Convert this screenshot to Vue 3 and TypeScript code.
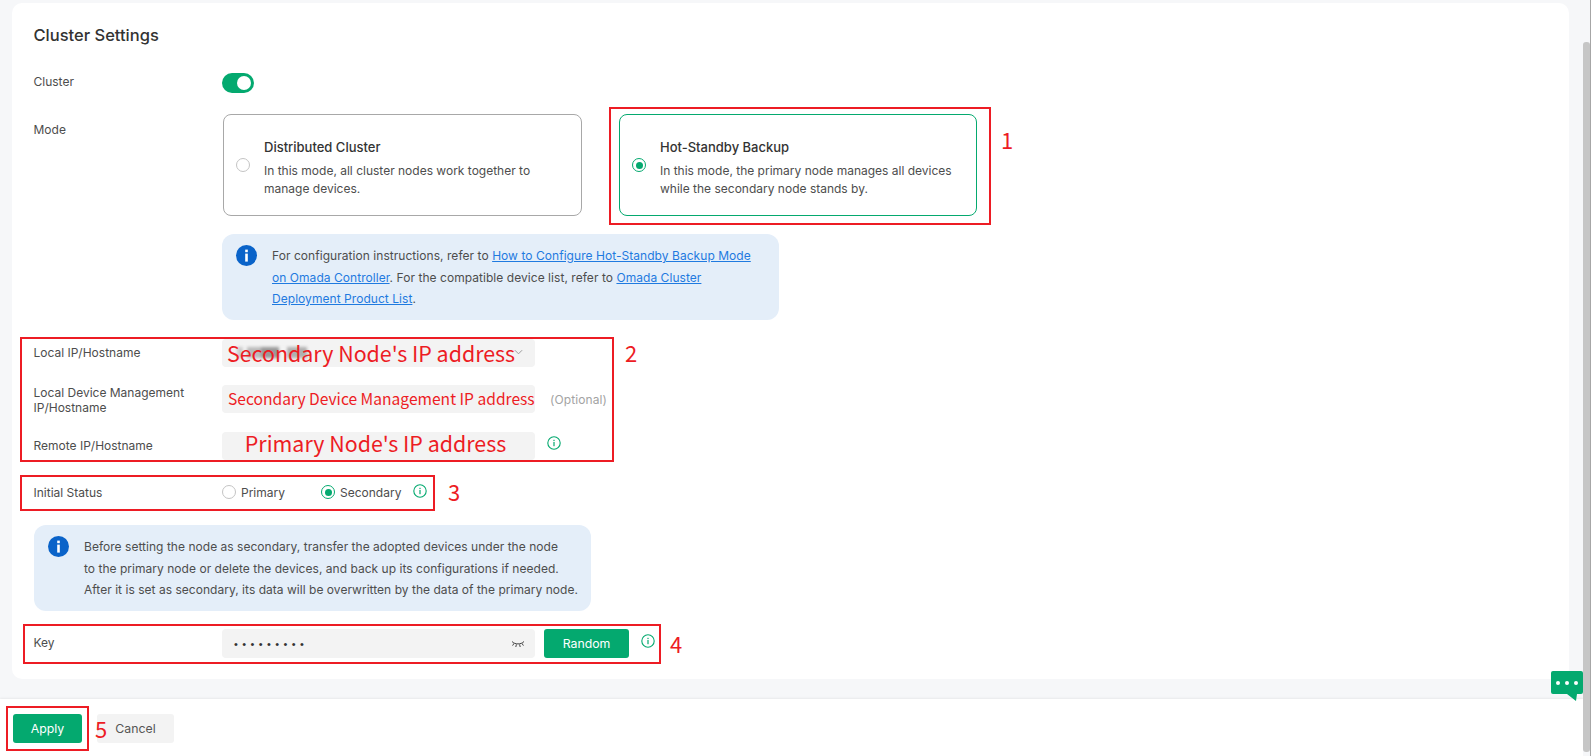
<script setup lang="ts">
const modes = [
  { title: 'Distributed Cluster', desc: 'In this mode, all cluster nodes work together to manage devices.', on: false },
  { title: 'Hot-Standby Backup', desc: 'In this mode, the primary node manages all devices while the secondary node stands by.', on: true },
]
</script>

<template>
  <div class="page">
    <div class="main">
      <div class="content">
        <section class="card">
          <h1 class="title">Cluster Settings</h1>

          <div class="row row-cluster">
            <div class="label label-short">Cluster</div>
            <div class="toggle"><span class="knob"></span></div>
          </div>

          <div class="row row-mode">
            <div class="label label-mode">Mode</div>
            <div class="modes">
              <div v-for="m in modes" :key="m.title" class="mode" :class="{ active: m.on }">
                <span class="radio" :class="{ checked: m.on }"></span>
                <div class="mode-text">
                  <div class="mode-title">{{ m.title }}</div>
                  <div class="mode-desc">{{ m.desc }}</div>
                </div>
              </div>
            </div>
          </div>

          <div class="notice notice-a">
            <svg class="notice-icon" viewBox="0 0 21 21"><circle cx="10.5" cy="10.5" r="10.5" fill="#0a63c9"/><rect x="9.2" y="8.6" width="2.6" height="8" fill="#fff"/><rect x="9.2" y="4.6" width="2.6" height="2.6" fill="#fff"/></svg>
            <p>For configuration instructions, refer to <a>How to Configure Hot-Standby Backup Mode on Omada Controller</a>. For the compatible device list, refer to <a>Omada Cluster Deployment Product List</a>.</p>
          </div>

          <div class="row row-ip row-first">
            <div class="label label-up">Local IP/Hostname</div>
            <div class="field field-select">
              <span class="blur"></span>
              <span class="note note-a">Secondary Node's IP address</span>
              <svg class="chevron" viewBox="0 0 10 6"><path d="M1 1l4 4 4-4" fill="none" stroke="#9a9a9a" stroke-width="1.1"/></svg>
            </div>
          </div>
          <div class="row row-ip row-second">
            <div class="label label-two">Local Device Management IP/Hostname</div>
            <div class="field"><span class="note note-b">Secondary Device Management IP address</span></div>
            <span class="optional">(Optional)</span>
          </div>
          <div class="row row-ip row-third">
            <div class="label label-up">Remote IP/Hostname</div>
            <div class="field field-center"><span class="note note-c">Primary Node's IP address</span></div>
            <svg class="hint hint-remote" viewBox="0 0 14 14"><circle cx="7" cy="7" r="6.2" fill="none" stroke="#04a96f" stroke-width="1.1"/><rect x="6.4" y="6" width="1.2" height="4.2" fill="#04a96f"/><rect x="6.4" y="3.8" width="1.2" height="1.3" fill="#04a96f"/></svg>
          </div>

          <div class="row row-status">
            <div class="label">Initial Status</div>
            <label class="choice choice-primary"><span class="radio"></span>Primary</label>
            <label class="choice choice-secondary"><span class="radio checked"></span>Secondary</label>
            <svg class="hint hint-status" viewBox="0 0 14 14"><circle cx="7" cy="7" r="6.2" fill="none" stroke="#04a96f" stroke-width="1.1"/><rect x="6.4" y="6" width="1.2" height="4.2" fill="#04a96f"/><rect x="6.4" y="3.8" width="1.2" height="1.3" fill="#04a96f"/></svg>
          </div>

          <div class="notice notice-b">
            <svg class="notice-icon" viewBox="0 0 21 21"><circle cx="10.5" cy="10.5" r="10.5" fill="#0a63c9"/><rect x="9.2" y="8.6" width="2.6" height="8" fill="#fff"/><rect x="9.2" y="4.6" width="2.6" height="2.6" fill="#fff"/></svg>
            <p>Before setting the node as secondary, transfer the adopted devices under the node<br>to the primary node or delete the devices, and back up its configurations if needed.<br>After it is set as secondary, its data will be overwritten by the data of the primary node.</p>
          </div>

          <div class="row row-key">
            <div class="label label-up">Key</div>
            <div class="field field-key">
              <span class="dots">•••••••••</span>
              <svg class="eye" viewBox="0 0 14 9"><path d="M1 1.5c2.8 3.2 9.2 3.2 12 0M3 3.4L1.6 5.6M5.4 4.4L4.8 7M8.6 4.4L9.2 7M11 3.4l1.4 2.2" fill="none" stroke="#444" stroke-width="1"/></svg>
            </div>
            <button class="btn btn-primary btn-random">Random</button>
            <svg class="hint hint-key" viewBox="0 0 14 14"><circle cx="7" cy="7" r="6.2" fill="none" stroke="#04a96f" stroke-width="1.1"/><rect x="6.4" y="6" width="1.2" height="4.2" fill="#04a96f"/><rect x="6.4" y="3.8" width="1.2" height="1.3" fill="#04a96f"/></svg>
          </div>
        </section>
      </div>
      <footer class="footer">
        <button class="btn btn-primary btn-apply">Apply</button>
        <button class="btn btn-cancel">Cancel</button>
      </footer>
    </div>
    <div class="scrolltrack"><div class="thumb"></div></div>

    <div class="chat">
      <svg viewBox="0 0 32 30"><path d="M2 0h28a2 2 0 0 1 2 2v19a2 2 0 0 1-2 2h-4l-1 7-9-7H2a2 2 0 0 1-2-2V2a2 2 0 0 1 2-2z" fill="#04a96f"/><circle cx="7" cy="12" r="2" fill="#fff"/><circle cx="16" cy="12" r="2" fill="#fff"/><circle cx="25" cy="12" r="2" fill="#fff"/></svg>
    </div>

    <div class="mark mark-1"></div><span class="num num-1">1</span>
    <div class="mark mark-2"></div><span class="num num-2">2</span>
    <div class="mark mark-3"></div><span class="num num-3">3</span>
    <div class="mark mark-4"></div><span class="num num-4">4</span>
    <div class="mark mark-5"></div><span class="num num-5">5</span>
  </div>
</template>

<style>
html, body { margin: 0; padding: 0; background: #fff; overflow: hidden; }
</style>

<style scoped>
.page {
  position: relative;
  display: flex;
  width: 1591px;
  height: 756px;
  overflow: hidden;
  font-family: Inter, "Open Sans", sans-serif;
  font-size: 12px;
  color: #4d4d4d;
  background: #fff;
}
.main { flex: 1; display: flex; flex-direction: column; min-width: 0; }
.content { height: 699px; box-sizing: border-box; background: #f6f7f9; padding: 3px 14px 0 12px; }
.card {
  height: 676px;
  box-sizing: border-box;
  background: #fff;
  border-radius: 10px;
  padding: 21px 22px 0 21.5px;
}
.title { margin: 0; font-size: 16.5px; line-height: 22px; font-weight: 500; color: #333; }
.row { display: flex; align-items: center; }
.label { width: 188.5px; flex: none; line-height: 15px; padding-right: 8px; box-sizing: border-box; }
.label-up { margin-bottom: 2px; }
.label-two { margin-top: 2px; }

.row-cluster { align-items: flex-start; margin-top: 27px; height: 20px; }
.label-short { line-height: 18px; }
.toggle { width: 32px; height: 20px; border-radius: 10px; background: #04a96f; position: relative; }
.knob { position: absolute; right: 3px; top: 3px; width: 14px; height: 14px; border-radius: 50%; background: #fff; }

.row-mode { align-items: flex-start; margin-top: 21px; }
.label-mode { padding-top: 8px; }
.modes { display: flex; gap: 37px; margin-left: 1px; }
.mode {
  width: 359px;
  height: 102px;
  box-sizing: border-box;
  border: 1px solid #a8a8a8;
  border-radius: 8px;
  display: flex;
  align-items: center;
  padding-left: 12px;
}
.mode.active { border-color: #04a96f; width: 358px; }
.radio {
  display: inline-block;
  flex: none;
  width: 14px;
  height: 14px;
  box-sizing: border-box;
  border: 1px solid #c4c4c4;
  border-radius: 50%;
  background: #fff;
  position: relative;
}
.radio.checked { border-color: #04a96f; }
.radio.checked::after {
  content: "";
  position: absolute;
  left: 2.5px;
  top: 2.5px;
  width: 7px;
  height: 7px;
  border-radius: 50%;
  background: #04a96f;
}
.mode-text { margin-left: 14px; width: 300px; padding-top: 5px; }
.mode-title { font-size: 13px; line-height: 20px; font-weight: 500; color: #333; margin-bottom: 5px; }
.mode-desc { line-height: 18px; }

.notice {
  width: 557px;
  height: 86px;
  box-sizing: border-box;
  background: #e4eef9;
  border-radius: 12px;
  display: flex;
  padding: 11px 14px 0;
}
.notice p { margin: 0; margin-left: 15px; line-height: 21.5px; white-space: normal; }
.notice-a p { width: 490px; letter-spacing: 0.05px; }
.notice-b p { width: 510px; flex: none; letter-spacing: 0.03px; }
.notice a { color: #1f7ae0; text-decoration: underline; }
.notice-icon { width: 21px; height: 21px; flex: none; }
.notice-a { margin: 18px 0 0 188.5px; }
.notice-b { margin-top: 23px; margin-left: 0.5px; }

.row-ip { height: 28px; }
.row-first { margin-top: 19px; }
.row-second { margin-top: 18px; }
.row-third { margin-top: 19px; }
.field {
  width: 313px;
  height: 28px;
  flex: none;
  box-sizing: border-box;
  background: #f3f3f3;
  border-radius: 4px;
  position: relative;
  display: flex;
  align-items: center;
  padding-left: 6px;
  white-space: nowrap;
}
.field-center { justify-content: center; padding-left: 0; }
.note { color: #ed1c24; font-family: "Noto Sans CJK SC", "Noto Sans", sans-serif; position: relative; }
.note-a { font-size: 21.4px; line-height: 28px; left: -1px; }
.note-b { font-size: 15.6px; line-height: 28px; bottom: 1px; }
.note-c { font-size: 21.4px; line-height: 28px; bottom: 3px; right: 3px; }
.blur {
  position: absolute;
  left: 15px;
  top: 8px;
  width: 70px;
  height: 11px;
  filter: blur(1.5px);
  background: linear-gradient(90deg, #ccc 0 9%, #f3f3f3 9% 15%, #bbb 15% 35%, #999 35% 60%, #f3f3f3 60% 72%, #b0b0b0 72% 100%);
}
.chevron { position: absolute; right: 12px; top: 10px; width: 9px; height: 6px; }
.optional { margin-left: 15px; color: #a3a3a3; letter-spacing: 0.1px; }
.hint { width: 14px; height: 14px; flex: none; }
.hint-remote { margin-left: 12px; margin-bottom: 6px; }

.row-status { margin-top: 22px; height: 20px; }
.choice { display: inline-flex; align-items: center; gap: 5px; }
.choice-primary { width: 99px; }
.hint-status { margin-left: 12px; margin-bottom: 2px; }

.row-key { margin-top: 18px; height: 29px; }
.field-key { height: 29px; padding-left: 12px; }
.dots { color: #333; font-size: 11px; letter-spacing: 4.4px; font-family: "Liberation Sans", sans-serif; }
.eye { position: absolute; right: 10px; top: 11px; width: 14px; height: 9px; }
.btn {
  border: 0;
  font: inherit;
  font-size: 12.3px;
  height: 29px;
  border-radius: 3px;
  padding: 0;
}
.btn-primary { background: #04a96f; color: #fff; }
.btn-random { width: 85px; margin-left: 9px; }
.hint-key { margin-left: 12px; margin-bottom: 6px; }

.footer {
  height: 57px;
  box-sizing: border-box;
  padding: 15px 0 0 13px;
  display: flex;
  gap: 15px;
  background: #fff;
  box-shadow: 0 -1px 2px rgba(0, 0, 0, 0.06);
  position: relative;
}
.btn-apply { width: 69px; }
.btn-cancel { width: 77px; background: #f3f3f3; color: #555; }

.scrolltrack { width: 8px; flex: none; background: #f6f7f9; position: relative; border-right: 1px solid #a6a6a6; box-sizing: border-box; }
.thumb { position: absolute; left: 0; right: 0; top: 42px; height: 710px; background: #c6c6c6; border-radius: 3px; }

.chat { position: absolute; left: 1551px; top: 671px; width: 32px; height: 30px; }
.chat svg { display: block; width: 32px; height: 30px; }

.mark { position: absolute; border: 2px solid #ed1c24; box-sizing: border-box; pointer-events: none; }
.mark-1 { left: 609px; top: 107px; width: 382px; height: 118px; }
.mark-2 { left: 20px; top: 337px; width: 594px; height: 125px; }
.mark-3 { left: 20px; top: 475px; width: 415px; height: 36px; }
.mark-4 { left: 23px; top: 624px; width: 638px; height: 40px; }
.mark-5 { left: 6px; top: 706px; width: 83px; height: 45px; }
.num { position: absolute; color: #ed1c24; font-family: "Noto Sans CJK SC", "Noto Sans", sans-serif; font-size: 22px; line-height: 26px; }
.num-1 { left: 1001px; top: 126px; }
.num-2 { left: 625px; top: 339px; }
.num-3 { left: 448px; top: 478px; }
.num-4 { left: 670px; top: 630px; }
.num-5 { left: 95px; top: 715px; }
</style>
